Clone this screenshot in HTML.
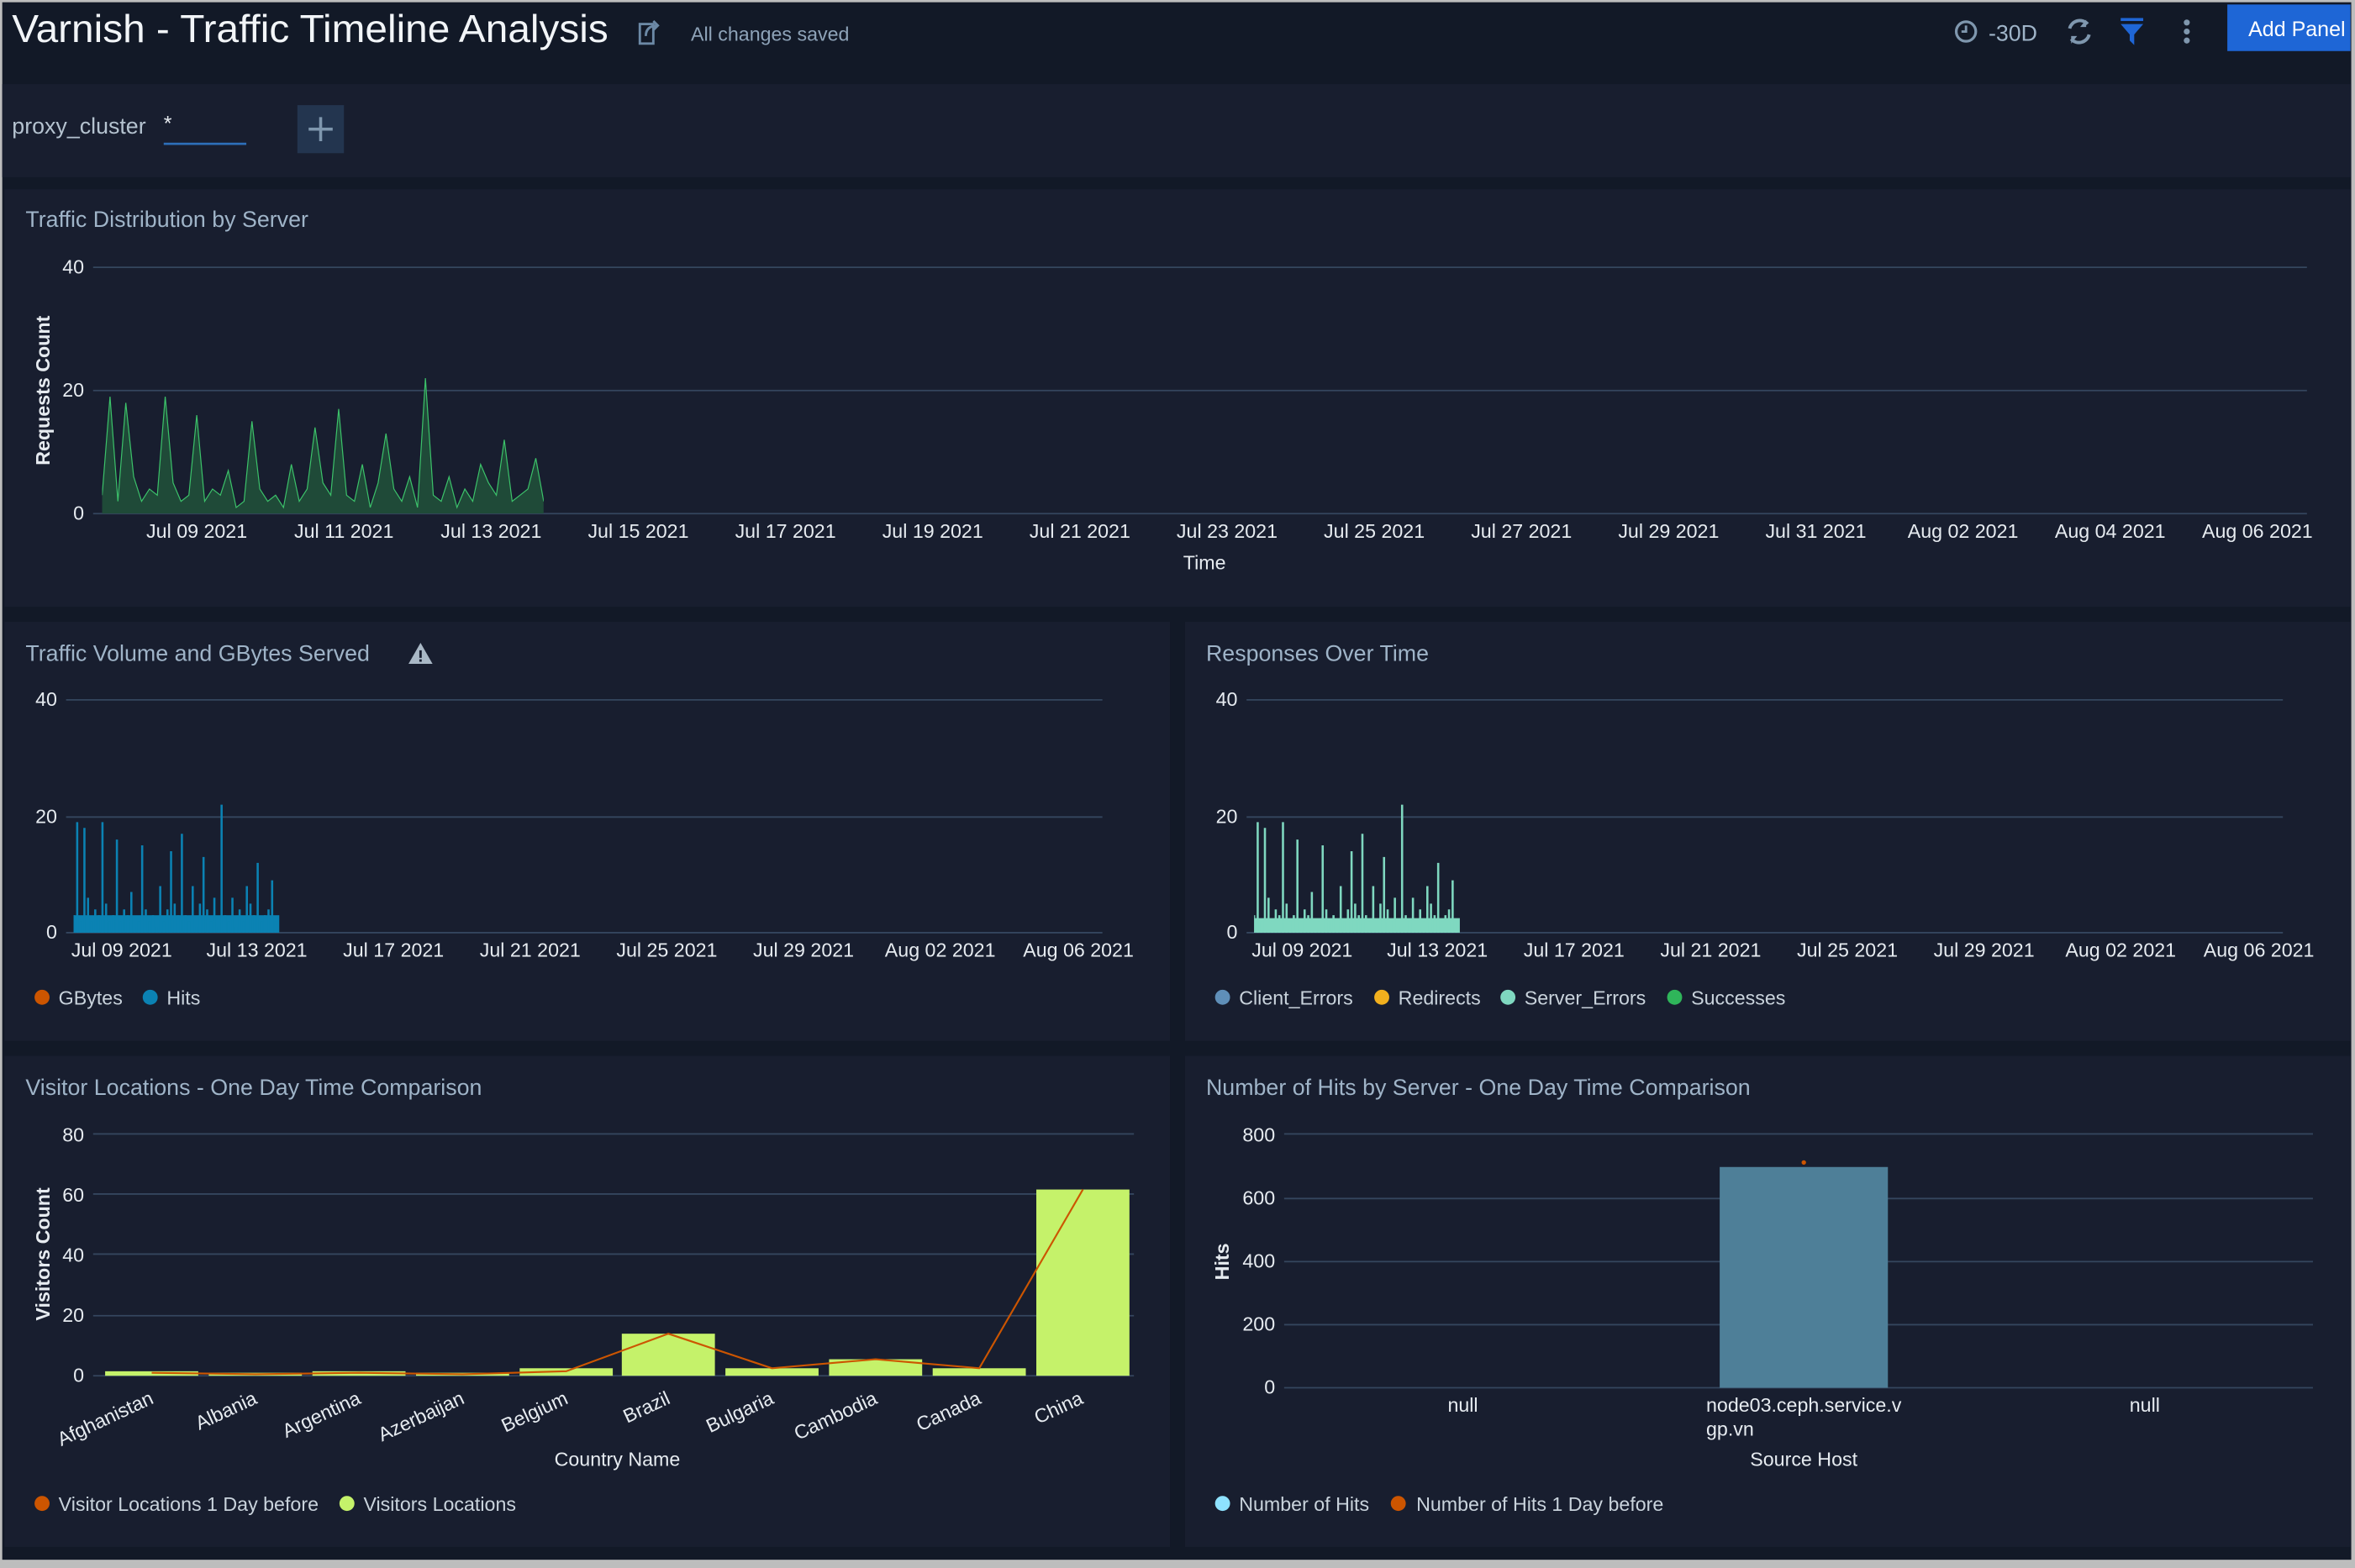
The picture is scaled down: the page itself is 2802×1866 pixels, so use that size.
<!DOCTYPE html>
<html><head><meta charset="utf-8"><style>
html,body{margin:0;padding:0;background:#bdbdbd;width:2802px;height:1866px;overflow:hidden}
svg{display:block}
text{font-family:"Liberation Sans",sans-serif}
.t{fill:#9fb4c8;font-size:15px}
.k{fill:#e6ebf0;font-size:13px}
.g{stroke:#34465e;stroke-width:1}
.l{fill:#c9d3dc;font-size:13px}
</style></head><body>
<svg width="2802" height="1866" viewBox="0 0 1568 1044" preserveAspectRatio="none">
<defs>
<path id="sp" d="M0,0V-3M1,0V-19M2,0V-2M3,0V-18M4,0V-6M5,0V-2M6,0V-4M7,0V-3M8,0V-19M9,0V-5M10,0V-2M11,0V-3M12,0V-16M13,0V-2M14,0V-4M15,0V-3M16,0V-7M17,0V-1M18,0V-2M19,0V-15M20,0V-4M21,0V-2M22,0V-3M23,0V-1M24,0V-8M25,0V-2M26,0V-4M27,0V-14M28,0V-5M29,0V-3M30,0V-17M31,0V-3M32,0V-2M33,0V-8M34,0V-1M35,0V-5M36,0V-13M37,0V-4M38,0V-2M39,0V-6M40,0V-1M41,0V-22M42,0V-3M43,0V-2M44,0V-6M45,0V-1M46,0V-4M47,0V-2M48,0V-8M49,0V-5M50,0V-3M51,0V-12M52,0V-2M53,0V-3M54,0V-4M55,0V-9M56,0V-2"/>
</defs>
<rect x="1.5" y="1.5" width="1564" height="1037" fill="#121927"/>
<!-- header -->
<text x="8" y="28" fill="#f2f5f8" font-size="26" font-weight="300" textLength="397" lengthAdjust="spacingAndGlyphs">Varnish - Traffic Timeline Analysis</text>
<g fill="none" stroke="#6c89a6" stroke-width="1.6"><rect x="426" y="16" width="9" height="13"/><path d="M430,24 q0,-7 8,-7 M435,14 l3,3 -3,3"/></g>
<text x="460" y="27" fill="#8ea3b8" font-size="13">All changes saved</text>
<circle cx="1309" cy="21" r="6.5" fill="none" stroke="#7f97ae" stroke-width="1.8"/><path d="M1309,17v4h-3" stroke="#7f97ae" stroke-width="1.6" fill="none"/>
<text x="1324" y="27" fill="#9fb4c8" font-size="15">-30D</text>
<g fill="none" stroke="#7f97ae" stroke-width="2.2"><path d="M1378,19a7,7 0 0 1 12,-3M1391,23a7,7 0 0 1 -12,3"/></g>
<path d="M1389,13v5h-4zM1379,29v-5h4z" fill="#7f97ae"/>
<rect x="1412" y="12" width="15" height="2" fill="#1f66d6"/><path d="M1412,16h15l-6,7v7l-3,-3v-4z" fill="#1f66d6"/>
<circle cx="1456" cy="15" r="2" fill="#7f97ae"/><circle cx="1456" cy="21" r="2" fill="#7f97ae"/><circle cx="1456" cy="27" r="2" fill="#7f97ae"/>
<rect x="1483" y="3" width="82" height="31" fill="#1e66d6"/>
<text x="1497" y="24" fill="#fff" font-size="14">Add Panel</text>
<!-- filter bar -->
<rect x="1.5" y="56" width="1564" height="62" fill="#181e2f"/>
<text x="8" y="89" fill="#b4c2cf" font-size="15">proxy_cluster</text>
<text x="109" y="87" fill="#e6ebf0" font-size="14">*</text>
<rect x="109" y="95" width="55" height="1.5" fill="#2d6fb9"/>
<rect x="198" y="70" width="31" height="32" fill="#23354f"/>
<path d="M213.5,78v16M205.5,86h16" stroke="#7f97ae" stroke-width="2"/>
<!-- panels -->
<rect x="3" y="126" width="1562" height="278" fill="#181e2f"/>
<rect x="3" y="414" width="776" height="279" fill="#181e2f"/>
<rect x="789" y="414" width="776" height="279" fill="#181e2f"/>
<rect x="3" y="703" width="776" height="327" fill="#181e2f"/>
<rect x="789" y="703" width="776" height="327" fill="#181e2f"/>

<!-- top chart -->
<text x="17" y="151" class="t">Traffic Distribution by Server</text>
<line x1="62" y1="178" x2="1536" y2="178" class="g"/><line x1="62" y1="260" x2="1536" y2="260" class="g"/><line x1="62" y1="342" x2="1536" y2="342" class="g" stroke-width="1.5"/>
<text x="56" y="182" class="k" text-anchor="end">40</text><text x="56" y="264" class="k" text-anchor="end">20</text><text x="56" y="346" class="k" text-anchor="end">0</text>
<text transform="translate(33,260) rotate(-90)" fill="#e6ebf0" font-size="13" font-weight="bold" text-anchor="middle">Requests Count</text>
<svg x="68" y="178" width="294" height="164" viewBox="0 -40 56 40" preserveAspectRatio="none">
<polygon fill="#1f4a38" points="0,0 0,-3 1,-19 2,-2 3,-18 4,-6 5,-2 6,-4 7,-3 8,-19 9,-5 10,-2 11,-3 12,-16 13,-2 14,-4 15,-3 16,-7 17,-1 18,-2 19,-15 20,-4 21,-2 22,-3 23,-1 24,-8 25,-2 26,-4 27,-14 28,-5 29,-3 30,-17 31,-3 32,-2 33,-8 34,-1 35,-5 36,-13 37,-4 38,-2 39,-6 40,-1 41,-22 42,-3 43,-2 44,-6 45,-1 46,-4 47,-2 48,-8 49,-5 50,-3 51,-12 52,-2 53,-3 54,-4 55,-9 56,-2 56,0"/>
<polyline fill="none" stroke="#3cc26a" stroke-width="1.2" vector-effect="non-scaling-stroke" points="0,-3 1,-19 2,-2 3,-18 4,-6 5,-2 6,-4 7,-3 8,-19 9,-5 10,-2 11,-3 12,-16 13,-2 14,-4 15,-3 16,-7 17,-1 18,-2 19,-15 20,-4 21,-2 22,-3 23,-1 24,-8 25,-2 26,-4 27,-14 28,-5 29,-3 30,-17 31,-3 32,-2 33,-8 34,-1 35,-5 36,-13 37,-4 38,-2 39,-6 40,-1 41,-22 42,-3 43,-2 44,-6 45,-1 46,-4 47,-2 48,-8 49,-5 50,-3 51,-12 52,-2 53,-3 54,-4 55,-9 56,-2"/>
</svg>
<g class="k" text-anchor="middle">
<text x="131" y="358">Jul 09 2021</text><text x="229" y="358">Jul 11 2021</text><text x="327" y="358">Jul 13 2021</text><text x="425" y="358">Jul 15 2021</text><text x="523" y="358">Jul 17 2021</text><text x="621" y="358">Jul 19 2021</text><text x="719" y="358">Jul 21 2021</text><text x="817" y="358">Jul 23 2021</text><text x="915" y="358">Jul 25 2021</text><text x="1013" y="358">Jul 27 2021</text><text x="1111" y="358">Jul 29 2021</text><text x="1209" y="358">Jul 31 2021</text><text x="1307" y="358">Aug 02 2021</text><text x="1405" y="358">Aug 04 2021</text><text x="1503" y="358">Aug 06 2021</text>
<text x="802" y="379">Time</text></g>

<!-- middle left -->
<text x="17" y="440" class="t">Traffic Volume and GBytes Served</text>
<path d="M280,428l8,14h-16z" fill="#a9b8c6"/><rect x="279.2" y="433" width="1.6" height="5" fill="#181e2f"/><rect x="279.2" y="439" width="1.6" height="1.6" fill="#181e2f"/>
<line x1="44" y1="466" x2="734" y2="466" class="g"/><line x1="44" y1="544" x2="734" y2="544" class="g"/><line x1="44" y1="621" x2="734" y2="621" class="g" stroke-width="1.5"/>
<text x="38" y="470" class="k" text-anchor="end">40</text><text x="38" y="548" class="k" text-anchor="end">20</text><text x="38" y="625" class="k" text-anchor="end">0</text>
<svg x="49" y="466" width="137" height="155" viewBox="0 -40 57 40" preserveAspectRatio="none">
<rect x="0" y="-3" width="57" height="3" fill="#0b82b3"/>
<use href="#sp" stroke="#0b82b3" stroke-width="0.6"/></svg>
<g class="k" text-anchor="middle"><text x="81" y="637">Jul 09 2021</text><text x="171" y="637">Jul 13 2021</text><text x="262" y="637">Jul 17 2021</text><text x="353" y="637">Jul 21 2021</text><text x="444" y="637">Jul 25 2021</text><text x="535" y="637">Jul 29 2021</text><text x="626" y="637">Aug 02 2021</text><text x="718" y="637">Aug 06 2021</text></g>
<circle cx="28" cy="664" r="5" fill="#cc5500"/><text x="39" y="669" class="l">GBytes</text>
<circle cx="100" cy="664" r="5" fill="#0b82b3"/><text x="111" y="669" class="l">Hits</text>

<!-- middle right -->
<text x="803" y="440" class="t">Responses Over Time</text>
<line x1="830" y1="466" x2="1520" y2="466" class="g"/><line x1="830" y1="544" x2="1520" y2="544" class="g"/><line x1="830" y1="621" x2="1520" y2="621" class="g" stroke-width="1.5"/>
<text x="824" y="470" class="k" text-anchor="end">40</text><text x="824" y="548" class="k" text-anchor="end">20</text><text x="824" y="625" class="k" text-anchor="end">0</text>
<svg x="835" y="466" width="137" height="155" viewBox="0 -40 57 40" preserveAspectRatio="none">
<rect x="0" y="-2.5" width="57" height="2.5" fill="#7fd8c0"/>
<use href="#sp" stroke="#7fd8c0" stroke-width="0.6"/></svg>
<g class="k" text-anchor="middle"><text x="867" y="637">Jul 09 2021</text><text x="957" y="637">Jul 13 2021</text><text x="1048" y="637">Jul 17 2021</text><text x="1139" y="637">Jul 21 2021</text><text x="1230" y="637">Jul 25 2021</text><text x="1321" y="637">Jul 29 2021</text><text x="1412" y="637">Aug 02 2021</text><text x="1504" y="637">Aug 06 2021</text></g>
<circle cx="814" cy="664" r="5" fill="#5f8fb8"/><text x="825" y="669" class="l">Client_Errors</text>
<circle cx="920" cy="664" r="5" fill="#f2b01e"/><text x="931" y="669" class="l">Redirects</text>
<circle cx="1004" cy="664" r="5" fill="#7fd8c0"/><text x="1015" y="669" class="l">Server_Errors</text>
<circle cx="1115" cy="664" r="5" fill="#2fb55a"/><text x="1126" y="669" class="l">Successes</text>

<!-- bottom left -->
<text x="17" y="729" class="t">Visitor Locations - One Day Time Comparison</text>
<g><line x1="62" y1="755" x2="755" y2="755" class="g"/><line x1="62" y1="795" x2="755" y2="795" class="g"/><line x1="62" y1="835" x2="755" y2="835" class="g"/><line x1="62" y1="876" x2="755" y2="876" class="g"/><line x1="62" y1="916" x2="755" y2="916" class="g" stroke-width="1.5"/></g>
<g class="k" text-anchor="end"><text x="56" y="760">80</text><text x="56" y="800">60</text><text x="56" y="840">40</text><text x="56" y="880">20</text><text x="56" y="920">0</text></g>
<text transform="translate(33,835) rotate(-90)" fill="#e6ebf0" font-size="13" font-weight="bold" text-anchor="middle">Visitors Count</text>
<g fill="#c5f26a">
<rect x="70" y="913" width="62" height="3"/><rect x="139" y="914" width="62" height="2"/><rect x="208" y="913" width="62" height="3"/><rect x="277" y="914" width="62" height="2"/><rect x="346" y="911" width="62" height="5"/><rect x="414" y="888" width="62" height="28"/><rect x="483" y="911" width="62" height="5"/><rect x="552" y="905" width="62" height="11"/><rect x="621" y="911" width="62" height="5"/><rect x="690" y="792" width="62" height="124"/></g>
<polyline fill="none" stroke="#cc5500" stroke-width="1.2" points="101,914 170,915 239,914 308,915 377,913 445,888 514,911 583,905 652,911 721,792"/>
<g class="k" text-anchor="end">
<text transform="translate(103,934) rotate(-25)">Afghanistan</text><text transform="translate(172,934) rotate(-25)">Albania</text><text transform="translate(241,934) rotate(-25)">Argentina</text><text transform="translate(310,934) rotate(-25)">Azerbaijan</text><text transform="translate(379,934) rotate(-25)">Belgium</text><text transform="translate(447,934) rotate(-25)">Brazil</text><text transform="translate(516,934) rotate(-25)">Bulgaria</text><text transform="translate(585,934) rotate(-25)">Cambodia</text><text transform="translate(654,934) rotate(-25)">Canada</text><text transform="translate(722,934) rotate(-25)">China</text></g>
<text x="411" y="976" class="k" text-anchor="middle">Country Name</text>
<circle cx="28" cy="1001" r="5" fill="#cc5500"/><text x="39" y="1006" class="l">Visitor Locations 1 Day before</text>
<circle cx="231" cy="1001" r="5" fill="#c5f26a"/><text x="242" y="1006" class="l">Visitors Locations</text>

<!-- bottom right -->
<text x="803" y="729" class="t">Number of Hits by Server - One Day Time Comparison</text>
<g><line x1="855" y1="755" x2="1540" y2="755" class="g"/><line x1="855" y1="798" x2="1540" y2="798" class="g"/><line x1="855" y1="840" x2="1540" y2="840" class="g"/><line x1="855" y1="882" x2="1540" y2="882" class="g"/><line x1="855" y1="924" x2="1540" y2="924" class="g" stroke-width="1.5"/></g>
<g class="k" text-anchor="end"><text x="849" y="760">800</text><text x="849" y="802">600</text><text x="849" y="844">400</text><text x="849" y="886">200</text><text x="849" y="928">0</text></g>
<text transform="translate(818,840) rotate(-90)" fill="#e6ebf0" font-size="13" font-weight="bold" text-anchor="middle">Hits</text>
<rect x="1145" y="777" width="112" height="147" fill="#4e7f98"/>
<circle cx="1201" cy="774" r="1.5" fill="#cc5500"/>
<g class="k" text-anchor="middle"><text x="974" y="940">null</text><text x="1201" y="940">node03.ceph.service.v</text><text x="1428" y="940">null</text></g>
<text x="1136" y="956" class="k">gp.vn</text>
<text x="1201" y="976" class="k" text-anchor="middle">Source Host</text>
<circle cx="814" cy="1001" r="5" fill="#8ee2ff"/><text x="825" y="1006" class="l">Number of Hits</text>
<circle cx="931" cy="1001" r="5" fill="#cc5500"/><text x="943" y="1006" class="l">Number of Hits 1 Day before</text>
</svg>
</body></html>
